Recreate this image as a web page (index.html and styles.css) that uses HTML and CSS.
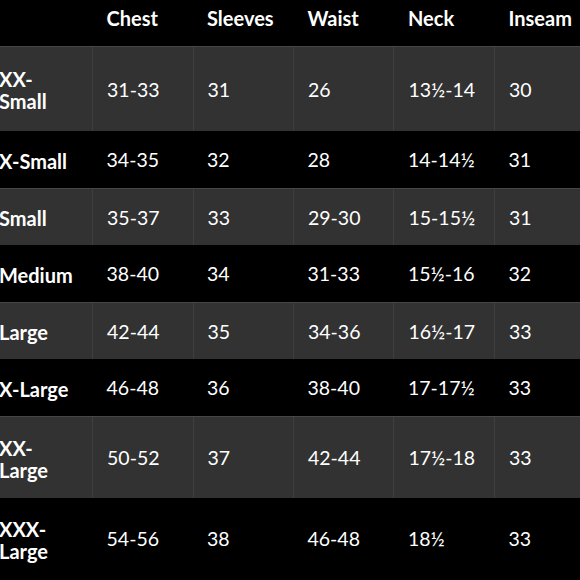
FILE: index.html
```html
<!DOCTYPE html>
<html>
<head>
<meta charset="utf-8">
<link rel="stylesheet" href="styles.css">
</head>
<body>
<table class="chart">
  <colgroup>
    <col class="c-size"><col class="c"><col class="c"><col class="c"><col class="c"><col class="c">
  </colgroup>
  <thead>
    <tr class="head">
      <th></th><th>Chest</th><th>Sleeves</th><th>Waist</th><th>Neck</th><th>Inseam</th>
    </tr>
  </thead>
  <tbody>
    <tr class="alt tall"><th>XX-<br>Small</th><td>31-33</td><td>31</td><td>26</td><td>13½-14</td><td>30</td></tr>
    <tr><th>X-Small</th><td>34-35</td><td>32</td><td>28</td><td>14-14½</td><td>31</td></tr>
    <tr class="alt"><th>Small</th><td>35-37</td><td>33</td><td>29-30</td><td>15-15½</td><td>31</td></tr>
    <tr><th>Medium</th><td>38-40</td><td>34</td><td>31-33</td><td>15½-16</td><td>32</td></tr>
    <tr class="alt"><th>Large</th><td>42-44</td><td>35</td><td>34-36</td><td>16½-17</td><td>33</td></tr>
    <tr><th>X-Large</th><td>46-48</td><td>36</td><td>38-40</td><td>17-17½</td><td>33</td></tr>
    <tr class="alt tall2"><th>XX-<br>Large</th><td>50-52</td><td>37</td><td>42-44</td><td>17½-18</td><td>33</td></tr>
    <tr class="tall3"><th>XXX-<br>Large</th><td>54-56</td><td>38</td><td>46-48</td><td>18½</td><td>33</td></tr>
  </tbody>
</table>
</body>
</html>
```
FILE: styles.css
```css
html, body {
  margin: 0;
  padding: 0;
  background: #000;
  overflow: hidden;
}
.chart {
  border-collapse: collapse;
  table-layout: fixed;
  width: 610px;
  margin-left: -15px;
  color: #fff;
  font-family: Lato, "Open Sans", sans-serif;
  font-size: 19.5px;
}
.c-size { width: 107px; }
.c { width: 100px; }
.chart th, .chart td {
  padding: 0 0 0 14px;
  text-align: left;
  vertical-align: middle;
  line-height: 22px;
  white-space: nowrap;
}
.chart th { font-weight: 700; font-size: 20px; }
.chart td { font-weight: 400; padding-top: 2px; }
.chart tbody th { padding-top: 3px; }
.head { height: 46px; }
.head th { vertical-align: top; padding-top: 7px; }
.chart tbody tr { height: 57px; }
.chart tbody tr.tall { height: 85px; }
.chart tbody tr.tall2 { height: 82px; }
.chart tbody tr.tall3 { height: 80px; }
.alt { background: #323232; }
.alt td, .alt th { border-left: 1px solid #3e3e3e; }
.alt th:first-child { border-left: none; }
.alt td, .alt th { border-top: 1px solid #474747; }
```
